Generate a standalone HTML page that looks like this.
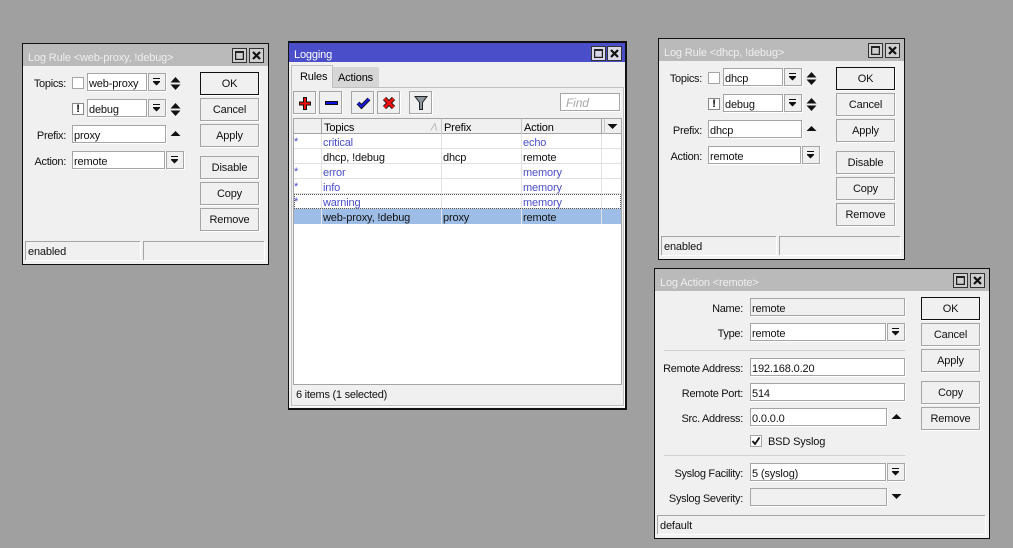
<!DOCTYPE html>
<html><head><meta charset="utf-8"><style>
html,body{margin:0;padding:0;background:#a0a0a0;width:1013px;height:548px;overflow:hidden}
body{position:relative;font:11px/16px "Liberation Sans",sans-serif;letter-spacing:-.15px;color:#000}
div,svg{position:absolute;box-sizing:border-box}
.w{background:#f0f0f0;border:1px solid #111}
.tb{left:0;top:0;right:0;height:22px;background:#bababa;color:#eee;padding:6px 0 0 5px;white-space:nowrap}
.mx,.cl{top:4px;width:15px;height:15px;border:1px solid #333;background:#cfcfcf}
.l{left:0;text-align:right;height:14px;color:#111;white-space:nowrap;letter-spacing:-.3px}
.i{background:#fff;border:1px solid #a5a5a5;height:18px;padding:2px 0 0 1px;white-space:nowrap;color:#111;box-shadow:1px 1px 0 #fff}
.d{background:#f0f0f0}
.a{background:#f0f0f0;border:1px solid #a5a5a5;width:18px;height:18px;box-shadow:1px 1px 0 #fff}
.b{width:59px;height:23px;border:1px solid #a5a5a5;background:#f0f0f0;text-align:center;line-height:23px;color:#111;box-shadow:1px 1px 0 #fff}
.ok{border:1px solid #111}
.c{width:12px;height:12px;border:1px solid #a5a5a5;background:#fff}
.s{height:19px;border-left:1px solid #a5a5a5;border-top:1px solid #a5a5a5;box-shadow:1px 1px 0 #fff;padding:2px 0 0 2px;color:#111}
.sep{height:1px;background:#d0d0d0}
.tbtn{width:23px;height:23px;border:1px solid #a5a5a5;background:#f0f0f0;box-shadow:1px 1px 0 #fff}
.r{left:5px;height:15px;border-bottom:1px solid #e0e0e0;background:#fff}
.x{top:1px;white-space:nowrap;color:#111}
.u{color:#4a4ec8}
.vl{width:1px;background:#e2e2e2}
</style></head><body>

<div class="w" style="left:22px;top:43px;width:247px;height:222px">
<div class="tb">Log Rule &lt;web-proxy, !debug&gt;</div>
<div class="mx" style="left:209px"><svg style="left:2px;top:2px" width="9" height="9"><path d="M.5.500h8v8h-8z" fill="none" stroke="#222" stroke-width="1.500"/><path d="M0 1.500h9" stroke="#222"/></svg></div>
<div class="cl" style="left:226px"><svg style="left:2px;top:2px" width="9" height="9"><path d="M1 1l7 7M8 1l-7 7" stroke="#111" stroke-width="2.200"/></svg></div>
<div class="l" style="top:32px;width:43px">Topics:</div>
<div class="c" style="left:49px;top:33px"></div>
<div class="i" style="left:64px;top:29px;width:60px">web-proxy</div>
<div class="a" style="left:125px;top:29px"><svg style="left:0;top:0" width="16" height="16"><path d="M4 4h7v1H4zM4 7h7v1l-3.500 3.500L4 8z" fill="#111"/></svg></div>
<svg style="left:147px;top:33px" width="11" height="13"><path d="M.5 5.500h10L5.500 0zM.5 7.500h10l-5 5.500z" fill="#111"/></svg>
<div class="c" style="left:49px;top:59px;border-color:#888;text-align:center;font-weight:bold;line-height:10px;font-size:11px">!</div>
<div class="i" style="left:64px;top:55px;width:60px">debug</div>
<div class="a" style="left:125px;top:55px"><svg style="left:0;top:0" width="16" height="16"><path d="M4 4h7v1H4zM4 7h7v1l-3.500 3.500L4 8z" fill="#111"/></svg></div>
<svg style="left:147px;top:59px" width="11" height="13"><path d="M.5 5.500h10L5.500 0zM.5 7.500h10l-5 5.500z" fill="#111"/></svg>
<div class="l" style="top:84px;width:43px">Prefix:</div>
<div class="i" style="left:49px;top:81px;width:94px">proxy</div>
<svg style="left:147px;top:87px" width="11" height="6"><path d="M.5 5h10L5.500 0z" fill="#111"/></svg>
<div class="l" style="top:110px;width:43px">Action:</div>
<div class="i" style="left:49px;top:107px;width:93px">remote</div>
<div class="a" style="left:143px;top:107px"><svg style="left:0;top:0" width="16" height="16"><path d="M4 4h7v1H4zM4 7h7v1l-3.500 3.500L4 8z" fill="#111"/></svg></div>
<div class="b ok" style="left:177px;top:28px">OK</div>
<div class="b" style="left:177px;top:54px">Cancel</div>
<div class="b" style="left:177px;top:80px">Apply</div>
<div class="b" style="left:177px;top:112px">Disable</div>
<div class="b" style="left:177px;top:138px">Copy</div>
<div class="b" style="left:177px;top:164px">Remove</div>
<div class="s" style="left:2px;top:197px;width:115px">enabled</div>
<div class="s" style="left:120px;top:197px;width:121px"></div>
</div>

<div class="w" style="left:658px;top:38px;width:247px;height:222px">
<div class="tb">Log Rule &lt;dhcp, !debug&gt;</div>
<div class="mx" style="left:209px"><svg style="left:2px;top:2px" width="9" height="9"><path d="M.5.500h8v8h-8z" fill="none" stroke="#222" stroke-width="1.500"/><path d="M0 1.500h9" stroke="#222"/></svg></div>
<div class="cl" style="left:226px"><svg style="left:2px;top:2px" width="9" height="9"><path d="M1 1l7 7M8 1l-7 7" stroke="#111" stroke-width="2.200"/></svg></div>
<div class="l" style="top:32px;width:43px">Topics:</div>
<div class="c" style="left:49px;top:33px"></div>
<div class="i" style="left:64px;top:29px;width:60px">dhcp</div>
<div class="a" style="left:125px;top:29px"><svg style="left:0;top:0" width="16" height="16"><path d="M4 4h7v1H4zM4 7h7v1l-3.500 3.500L4 8z" fill="#111"/></svg></div>
<svg style="left:147px;top:33px" width="11" height="13"><path d="M.5 5.500h10L5.500 0zM.5 7.500h10l-5 5.500z" fill="#111"/></svg>
<div class="c" style="left:49px;top:59px;border-color:#888;text-align:center;font-weight:bold;line-height:10px;font-size:11px">!</div>
<div class="i" style="left:64px;top:55px;width:60px">debug</div>
<div class="a" style="left:125px;top:55px"><svg style="left:0;top:0" width="16" height="16"><path d="M4 4h7v1H4zM4 7h7v1l-3.500 3.500L4 8z" fill="#111"/></svg></div>
<svg style="left:147px;top:59px" width="11" height="13"><path d="M.5 5.500h10L5.500 0zM.5 7.500h10l-5 5.500z" fill="#111"/></svg>
<div class="l" style="top:84px;width:43px">Prefix:</div>
<div class="i" style="left:49px;top:81px;width:94px">dhcp</div>
<svg style="left:147px;top:87px" width="11" height="6"><path d="M.5 5h10L5.500 0z" fill="#111"/></svg>
<div class="l" style="top:110px;width:43px">Action:</div>
<div class="i" style="left:49px;top:107px;width:93px">remote</div>
<div class="a" style="left:143px;top:107px"><svg style="left:0;top:0" width="16" height="16"><path d="M4 4h7v1H4zM4 7h7v1l-3.500 3.500L4 8z" fill="#111"/></svg></div>
<div class="b ok" style="left:177px;top:28px">OK</div>
<div class="b" style="left:177px;top:54px">Cancel</div>
<div class="b" style="left:177px;top:80px">Apply</div>
<div class="b" style="left:177px;top:112px">Disable</div>
<div class="b" style="left:177px;top:138px">Copy</div>
<div class="b" style="left:177px;top:164px">Remove</div>
<div class="s" style="left:2px;top:197px;width:115px">enabled</div>
<div class="s" style="left:120px;top:197px;width:121px"></div>
</div>

<div class="w" style="left:654px;top:268px;width:336px;height:271px">
<div class="tb">Log Action &lt;remote&gt;</div>
<div class="mx" style="left:298px"><svg style="left:2px;top:2px" width="9" height="9"><path d="M.5.500h8v8h-8z" fill="none" stroke="#222" stroke-width="1.500"/><path d="M0 1.500h9" stroke="#222"/></svg></div>
<div class="cl" style="left:315px"><svg style="left:2px;top:2px" width="9" height="9"><path d="M1 1l7 7M8 1l-7 7" stroke="#111" stroke-width="2.200"/></svg></div>
<div class="l" style="top:32px;width:88px">Name:</div>
<div class="i d" style="left:95px;top:29px;width:155px">remote</div>
<div class="l" style="top:57px;width:88px">Type:</div>
<div class="i" style="left:95px;top:54px;width:136px">remote</div>
<div class="a" style="left:232px;top:54px"><svg style="left:0;top:0" width="16" height="16"><path d="M4 4h7v1H4zM4 7h7v1l-3.500 3.500L4 8z" fill="#111"/></svg></div>
<div class="sep" style="left:9px;top:81px;width:241px"></div>
<div class="l" style="top:92px;width:88px">Remote Address:</div>
<div class="i" style="left:95px;top:89px;width:155px">192.168.0.20</div>
<div class="l" style="top:117px;width:88px">Remote Port:</div>
<div class="i" style="left:95px;top:114px;width:155px">514</div>
<div class="l" style="top:142px;width:88px">Src. Address:</div>
<div class="i" style="left:95px;top:139px;width:137px">0.0.0.0</div>
<svg style="left:236px;top:145px" width="11" height="6"><path d="M.5 5h10L5.500 0z" fill="#111"/></svg>
<div class="c" style="left:95px;top:166px"><svg style="left:0;top:0" width="10" height="10"><path d="M1.500 5l2.500 3L8.500 1.500" fill="none" stroke="#111" stroke-width="1.800"/></svg></div>
<div style="left:113px;top:165px;white-space:nowrap;color:#111">BSD Syslog</div>
<div class="sep" style="left:9px;top:186px;width:241px"></div>
<div class="l" style="top:197px;width:88px">Syslog Facility:</div>
<div class="i" style="left:95px;top:194px;width:136px">5 (syslog)</div>
<div class="a" style="left:232px;top:194px"><svg style="left:0;top:0" width="16" height="16"><path d="M4 4h7v1H4zM4 7h7v1l-3.500 3.500L4 8z" fill="#111"/></svg></div>
<div class="l" style="top:222px;width:88px">Syslog Severity:</div>
<div class="i d" style="left:95px;top:219px;width:137px"></div>
<svg style="left:236px;top:225px" width="11" height="6"><path d="M.5 0h10l-5 5z" fill="#111"/></svg>
<div class="b ok" style="left:266px;top:28px">OK</div>
<div class="b" style="left:266px;top:54px">Cancel</div>
<div class="b" style="left:266px;top:80px">Apply</div>
<div class="b" style="left:266px;top:112px">Copy</div>
<div class="b" style="left:266px;top:138px">Remove</div>
<div class="s" style="left:2px;top:246px;width:328px">default</div>
</div>

<div class="w" style="left:288px;top:41px;width:339px;height:369px;border-width:2px 2px 2px 1px">
<div class="tb" style="height:19px;background:#4a4ec8;color:#fff;padding:4px 0 0 5px">Logging</div>
<div class="mx" style="left:302px;top:3px;background:#d8d8e8"><svg style="left:2px;top:2px" width="9" height="9"><path d="M.5.500h8v8h-8z" fill="none" stroke="#222" stroke-width="1.500"/><path d="M0 1.500h9" stroke="#222"/></svg></div>
<div class="cl" style="left:318px;top:3px;background:#d8d8e8"><svg style="left:2px;top:2px" width="9" height="9"><path d="M1 1l7 7M8 1l-7 7" stroke="#111" stroke-width="2.200"/></svg></div>
<div style="left:2px;top:44px;width:333px;height:319px;border:1px solid #c0c0c0;box-shadow:1px 1px 0 #fff"></div>
<div style="left:2px;top:22px;width:42px;height:23px;border:1px solid #c0c0c0;border-bottom:0;background:#f0f0f0;padding:3px 0 0 8px;z-index:2">Rules</div>
<div style="left:44px;top:24px;width:46px;height:20px;background:#d6d6d6;padding:3px 0 0 5px">Actions</div>
<div class="tbtn" style="left:4px;top:48px"><svg style="left:3px;top:3px" width="15" height="16"><path d="M6.500 2.500h3v4.500h4v3h-4v4.500h-3V10h-4V7h4z" fill="#f01010" stroke="#111"/></svg></div>
<div class="tbtn" style="left:30px;top:48px"><svg style="left:3px;top:3px" width="15" height="15"><path d="M2.500 6.500h12v3h-12z" fill="#1010e0" stroke="#111"/></svg></div>
<div class="tbtn" style="left:62px;top:48px"><svg style="left:3px;top:3px" width="16" height="15"><path d="M3 8l3.500 3.500L14 4" fill="none" stroke="#111" stroke-width="4"/><path d="M3 8l3.500 3.500L14 4" fill="none" stroke="#1a1ae0" stroke-width="2.200"/></svg></div>
<div class="tbtn" style="left:88px;top:48px"><svg style="left:3px;top:3px" width="16" height="16"><path d="M3.500 3.500l9 9M12.500 3.500l-9 9" fill="none" stroke="#111" stroke-width="4.500"/><path d="M3.500 3.500l9 9M12.500 3.500l-9 9" fill="none" stroke="#f01010" stroke-width="2.800"/></svg></div>
<div class="tbtn" style="left:120px;top:48px"><svg style="left:3px;top:3px" width="16" height="16"><path d="M2 1.500h12L9.500 7.500v7h-3v-7z" fill="#8c949c" stroke="#222"/></svg></div>
<div class="i" style="left:271px;top:50px;width:60px;color:#a8a8a8;font-style:italic;padding:1px 0 0 5px;font-size:12px">Find</div>

<div style="left:4px;top:75px;width:329px;height:267px;border:1px solid #a5a5a5;background:#fff"></div>
<div style="left:5px;top:76px;width:327px;height:15px;background:#f0f0f0;border-bottom:1px solid #a5a5a5"></div>
<div class="vl" style="left:32px;top:76px;height:15px;background:#a5a5a5"></div>
<div class="vl" style="left:152px;top:76px;height:15px;background:#c8c8c8"></div>
<div class="vl" style="left:232px;top:76px;height:15px;background:#c8c8c8"></div>
<div class="vl" style="left:312px;top:76px;height:15px;background:#a5a5a5"></div>
<div class="vl" style="left:315px;top:76px;height:15px;background:#c8c8c8"></div>
<div style="left:35px;top:77px">Topics</div>
<svg style="left:141px;top:80px" width="7" height="8"><path d="M.5 7.500L5 .5l1.500 7" fill="none" stroke="#bbb"/></svg>
<div style="left:155px;top:77px">Prefix</div>
<div style="left:235px;top:77px">Action</div>
<svg style="left:318px;top:81px" width="11" height="6"><path d="M.5 0h10l-5 5z" fill="#111"/></svg>

<div class="r" style="top:91px;width:327px"><div class="x u" style="left:0;top:0">*</div><div class="x u" style="left:29px">critical</div><div class="x u" style="left:229px">echo</div></div>
<div class="r" style="top:106px;width:327px"><div class="x" style="left:29px">dhcp, !debug</div><div class="x" style="left:149px">dhcp</div><div class="x" style="left:229px">remote</div></div>
<div class="r" style="top:121px;width:327px"><div class="x u" style="left:0;top:0">*</div><div class="x u" style="left:29px">error</div><div class="x u" style="left:229px">memory</div></div>
<div class="r" style="top:136px;width:327px"><div class="x u" style="left:0;top:0">*</div><div class="x u" style="left:29px">info</div><div class="x u" style="left:229px">memory</div></div>
<div class="r" style="top:151px;width:327px;outline:1px dotted #555;outline-offset:-1px"><div class="x u" style="left:0;top:0">*</div><div class="x u" style="left:29px">warning</div><div class="x u" style="left:229px">memory</div></div>
<div class="r" style="top:166px;width:327px;background:#9dbde6;border-bottom:0"><div class="x" style="left:29px">web-proxy, !debug</div><div class="x" style="left:149px">proxy</div><div class="x" style="left:229px">remote</div></div>
<div class="vl" style="left:32px;top:91px;height:90px"></div>
<div class="vl" style="left:152px;top:91px;height:90px"></div>
<div class="vl" style="left:232px;top:91px;height:90px"></div>
<div class="vl" style="left:312px;top:91px;height:90px"></div>
<div style="left:7px;top:344px;color:#111;letter-spacing:-.25px">6 items (1 selected)</div>
</div>
</body></html>
